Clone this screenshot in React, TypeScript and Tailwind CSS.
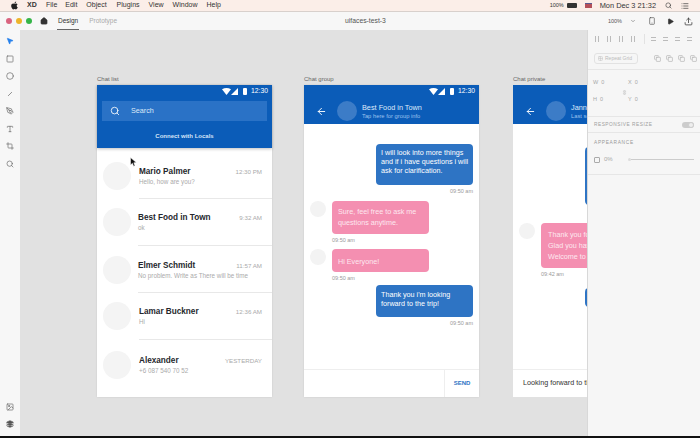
import React from 'react';
import { FaApple } from 'react-icons/fa';
import {
  ArrowLeft, Circle, Home, List, Minus, MousePointer2, PenTool, Play, Search, Smartphone, Square, Type, Upload, Layers, Crop, Link2, Grid2x2, Copy, ChevronDown, Image,
} from 'lucide-react';

const font = 'font-["Liberation_Sans",Arial,sans-serif]';

const chats = [
  { name: 'Mario Palmer', text: 'Hello, how are you?', time: '12:30 PM', pl: 'ml-[8px]', row: 'mt-[14px] h-[37px]' },
  { name: 'Best Food in Town', text: 'ok', time: '9:32 AM', pl: 'ml-[7px]', row: 'mt-[9px] h-[38px]' },
  { name: 'Elmer Schmidt', text: 'No problem. Write as There will be time', time: '11:57 AM', pl: 'ml-[7px]', row: 'mt-[10px] h-[37px]' },
  { name: 'Lamar Buckner', text: 'Hi', time: '12:36 AM', pl: 'ml-[8px]', row: 'mt-[9px] h-[38px]' },
  { name: 'Alexander', text: '+6 087 540 70 52', time: 'YESTERDAY', pl: 'ml-[8px]', row: 'mt-[11px] h-[37px]' },
];

function StatusBar() {
  return (
    <div className="h-[16px] flex items-center justify-end pb-[4px] pr-[4px] text-white">
      <svg width="9" height="7" viewBox="0 0 9 7"><path d="M0 1.2 Q4.5 -1 9 1.2 L4.5 7 Z" fill="white" /></svg>
      <svg width="7" height="7" viewBox="0 0 7 7"><path d="M7 0 V7 H0 Z" fill="white" /></svg>
      <div className="w-[4px] h-[7px] bg-white ml-[5px] mr-[4px] rounded-[1px]" />
      <span className="text-[6.8px]">12:30</span>
    </div>
  );
}

function ChatHeader({ title, sub, status = true }: { title: string; sub: string; status?: boolean }) {
  return (
    <div className="h-[39px] bg-[#0b5cb8] shrink-0">
      {status ? <StatusBar /> : <div className="h-[16px]" />}
      <div className="flex items-center">
        <ArrowLeft size={11} color="white" strokeWidth={2} className="ml-[12px]" />
        <div className="w-[20px] h-[20px] rounded-full bg-[#3c7cc7] ml-[10px] shrink-0" />
        <div className="ml-[5px] whitespace-nowrap">
          <div className="text-[7.3px] leading-[9px] text-[#dfeafa] font-medium">{title}</div>
          <div className="text-[5.8px] leading-[8px] text-[#9cc2ee]">{sub}</div>
        </div>
      </div>
    </div>
  );
}

function Bubble({ side, lines, time, box }: { side: 'me' | 'them'; lines: string[]; time: string; box: string }) {
  const me = side === 'me';
  return (
    <div className={`flex flex-col ${me ? 'items-end pr-[6px]' : 'items-start pl-[28px]'}`}>
      <div className="relative">
        {!me && <div className="absolute -left-[22px] top-0 w-[16px] h-[16px] rounded-full bg-[#f3f3f3]" />}
        <div className={`w-[97px] rounded-[4px] text-[7.2px] ${me ? 'px-[5px] bg-[#2e74c4] text-white' : 'px-[6px] bg-[#f48fb1] text-[#fde8f0]'} ${box}`}>
          {lines.map((l) => <div key={l} className="whitespace-nowrap">{l}</div>)}
        </div>
      </div>
      <div className="text-[5.5px] leading-[6px] mt-[3px] text-[#9a9a9a]">{time}</div>
    </div>
  );
}

export default function App() {
  return (
    <div className={`w-[700px] h-[438px] flex flex-col overflow-hidden bg-[#e1e1e1] text-[#333] ${font}`}>
      {/* mac menu bar */}
      <div className="h-[12px] shrink-0 bg-[#fbeee8] flex items-center text-[7px] text-[#333] border-b border-[#d8d0cc]">
        <FaApple size={9} className="ml-[10px] text-[#222]" />
        <span className="ml-[8px] font-bold w-[10px]">XD</span>
        <span className="ml-[9px]">File</span>
        <span className="ml-[8px]">Edit</span>
        <span className="ml-[9px]">Object</span>
        <span className="ml-[10px]">Plugins</span>
        <span className="ml-[9px]">View</span>
        <span className="ml-[9px]">Window</span>
        <span className="ml-[9px]">Help</span>
        <span className="ml-auto text-[5.5px]">100%</span>
        <div className="ml-[3px] w-[10px] h-[5px] bg-[#333] rounded-[1px]" />
        <div className="ml-[8px] w-[7px] h-[5px] bg-[#b4505a] border-t border-[#5a5a90]" />
        <span className="ml-[8px] text-[7.4px] whitespace-nowrap">Mon Dec 3 21:32</span>
        <Search size={7} className="ml-[9px]" />
        <List size={8} className="ml-[9px] mr-[11px]" />
      </div>

      {/* XD toolbar */}
      <div className="h-[18px] shrink-0 bg-[#f7f7f7] flex items-center text-[6.5px]">
        <div className="ml-[6px] w-[6px] h-[6px] rounded-full bg-[#d9637f]" />
        <div className="ml-[4px] w-[6px] h-[6px] rounded-full bg-[#edb42a]" />
        <div className="ml-[4px] w-[6px] h-[6px] rounded-full bg-[#35b548]" />
        <Home size={8} fill="#333" className="ml-[8px] text-[#333]" />
        <div className="ml-[9px] h-full flex items-center border-b border-[#666] px-[1px]">Design</div>
        <div className="ml-[10px] text-[#aaa]">Prototype</div>
        <div className="ml-[228px] text-[6.8px] text-[#555]">uifaces-test-3</div>
        <div className="ml-auto flex items-center text-[#555]">
          <span className="text-[5.5px]">100%</span>
          <ChevronDown size={6} className="ml-[8px]" />
          <Smartphone size={8} className="ml-[12px]" />
          <Play size={7} fill="#333" className="ml-[11px] text-[#333]" />
          <Upload size={9} className="ml-[10px] mr-[7px] text-[#333]" />
        </div>
      </div>

      <div className="flex-1 min-h-0 flex">
        {/* tool rail */}
        <div className="w-[20px] shrink-0 bg-[#f7f7f7] flex flex-col items-center pt-[7px] pb-[8px] text-[#666]">
          <div className="flex flex-col items-center gap-[9.5px]">
            <MousePointer2 size={8} fill="#2680eb" className="text-[#2680eb]" />
            <Square size={8} />
            <Circle size={8} />
            <Minus size={8} className="-rotate-45" />
            <PenTool size={8} />
            <Type size={8} />
            <Crop size={8} />
            <Search size={8} />
          </div>
          <div className="mt-auto flex flex-col items-center gap-[9px]">
            <Image size={8} />
            <Layers size={8} fill="#555" />
          </div>
        </div>

        {/* canvas */}
        <div className="flex-1 min-w-0 overflow-hidden flex pl-[77px] pt-[46px] relative">
          <div className="w-[175px] shrink-0">
            <div className="text-[6px] leading-[6px] mb-[3px] text-[#666]">Chat list</div>
            <div className="h-[312px] bg-white shadow-[0_0_2px_rgba(0,0,0,0.1)]">
              <div className="h-[63px] bg-[#0b5cb8] shadow-[0_1px_3px_rgba(0,0,0,0.25)]">
                <StatusBar />
                <div className="mx-[5px] h-[20px] bg-[#2a72c6] flex items-center text-white">
                  <Search size={10} strokeWidth={2} className="ml-[8px]" />
                  <span className="ml-[11px] text-[7.2px] text-[#dce9f8]">Search</span>
                </div>
                <div className="mt-[11px] text-center text-[6px] font-bold text-[#d5e5f7]">Connect with Locals</div>
              </div>
              {chats.map((c) => (
                <div key={c.name} className={`${c.row} flex pl-[6px]`}>
                  <div className="w-[28px] h-[28px] rounded-full bg-[#f4f4f4] shrink-0" />
                  <div className={`${c.pl} flex-1 min-w-0 flex flex-col pt-[4px]`}>
                    <div className="flex items-center justify-between pr-[10px]">
                      <span className="text-[8.2px] leading-[11px] font-bold text-[#25272c] whitespace-nowrap">{c.name}</span>
                      <span className="text-[6.2px] text-[#aaa] whitespace-nowrap">{c.time}</span>
                    </div>
                    <div className="text-[6.3px] leading-[9px] text-[#aaa] whitespace-nowrap">{c.text}</div>
                    {c.name !== 'Alexander' && <div className="mt-auto h-px bg-[#e8e8e8]" />}
                  </div>
                </div>
              ))}
            </div>
          </div>

          <div className="w-[175px] shrink-0 ml-[32px]">
            <div className="text-[6px] leading-[6px] mb-[3px] text-[#666]">Chat group</div>
            <div className="h-[312px] bg-white flex flex-col shadow-[0_0_2px_rgba(0,0,0,0.1)]">
              <ChatHeader title="Best Food in Town" sub="Tap here for group info" />
              <div className="flex-1 min-h-0 flex flex-col pt-[20px]">
                <Bubble side="me" box="h-[41px] pt-[4px] leading-[9px]" time="09:50 am" lines={['I will look into more things', 'and if i have questions i will', 'ask for clarification.']} />
                <div className="h-[7px] shrink-0" />
                <Bubble side="them" box="h-[33px] pt-[5px] leading-[11px]" time="09:50 am" lines={['Sure, feel free to ask me', 'questions anytime.']} />
                <div className="h-[6px] shrink-0" />
                <Bubble side="them" box="h-[23px] pt-[7px] leading-[11px]" time="09:50 am" lines={['Hi Everyone!']} />
                <div className="h-[4px] shrink-0" />
                <Bubble side="me" box="h-[32px] pt-[6px] leading-[8.5px]" time="09:50 am" lines={["Thank you i'm looking", 'forward to the trip!']} />
              </div>
              <div className="h-[28px] border-t border-[#eee] flex justify-end">
                <div className="w-[35px] border-l border-[#eee] flex items-center justify-center text-[6px] font-bold text-[#2e74c4]">SEND</div>
              </div>
            </div>
          </div>

          <div className="w-[175px] shrink-0 ml-[34px]">
            <div className="text-[6px] leading-[6px] mb-[3px] text-[#666]">Chat private</div>
            <div className="h-[312px] bg-white flex flex-col">
              <ChatHeader title="Jannette" sub="Last seen recently" status={false} />
              <div className="flex-1 min-h-0 flex flex-col">
                <div className="mt-[23px] ml-[72px] w-[97px] h-[58px] rounded-[4px] bg-[#2e74c4]" />
                <div className="mt-[18px] ml-[28px] w-[97px] h-[45px] rounded-[4px] bg-[#f48fb1] px-[7px] pt-[6px] text-[7.2px] leading-[11px] text-[#fde8f0] whitespace-nowrap relative">
                  <div className="absolute -left-[22px] top-0 w-[16px] h-[16px] rounded-full bg-[#f3f3f3]" />
                  <div>Thank you for</div>
                  <div>Glad you have</div>
                  <div>Welcome to the</div>
                </div>
                <div className="ml-[28px] mt-[3px] text-[5.5px] leading-[6px] text-[#9a9a9a]">09:42 am</div>
                <div className="mt-[11px] ml-[72px] w-[97px] h-[19px] rounded-[4px] bg-[#2e74c4]" />
              </div>
              <div className="h-[28px] border-t border-[#eee] flex items-center pl-[10px] text-[7.2px] text-[#333] whitespace-nowrap">Looking forward to the trip</div>
            </div>
          </div>

          {/* mouse pointer in the shot */}
          <svg className="absolute left-[110px] top-[127px]" width="7" height="10" viewBox="0 0 7 10">
            <path d="M0.5 0.5 L0.5 8 L2.4 6.3 L3.7 9.3 L5 8.7 L3.8 5.8 L6.3 5.6 Z" fill="#111" stroke="white" strokeWidth="0.5" />
          </svg>
        </div>

        {/* property inspector */}
        <div className="w-[113px] shrink-0 bg-[#f6f6f6] border-l border-[#d8d8d8] text-[#a8a8a8] text-[6px] flex flex-col">
          <div className="h-[40px] border-b border-[#e6e6e6] shrink-0">
            <div className="h-[18px] flex items-center pl-[7px]">
              <div className="flex gap-[8px]">
                {[0, 1, 2, 3].map((i) => <div key={i} className="w-[4px] h-[6px] border-x border-[#bbb]" />)}
              </div>
              <div className="w-px h-[10px] bg-[#e2e2e2] ml-[9px]" />
              <div className="flex gap-[7px] ml-[6px]">
                {[0, 1, 2, 3].map((i) => <div key={i} className="w-[5px] h-[4px] border-y border-[#bbb]" />)}
              </div>
            </div>
            <div className="flex items-center pl-[6px] pt-[5px]">
              <div className="w-[44px] h-[11px] rounded-[3px] border border-[#e2e2e2] flex items-center pl-[3px] gap-[2px] text-[5px] text-[#bbb] whitespace-nowrap">
                <Grid2x2 size={5} />Repeat Grid
              </div>
              <div className="ml-[16px] flex gap-[5px]">
                {[0, 1, 2, 3].map((i) => <Copy key={i} size={7} />)}
              </div>
            </div>
          </div>
          <div className="h-[47px] border-b border-[#e6e6e6] shrink-0 relative grid grid-cols-[35px_36px] content-start gap-y-[10px] pt-[9px] pl-[5px] text-[5.5px] leading-[7px]">
            <span>W&nbsp;&nbsp;0</span><span>X&nbsp;&nbsp;0</span>
            <span>H&nbsp;&nbsp;0</span><span>Y&nbsp;&nbsp;0</span>
            <Link2 size={5} className="absolute left-[34px] top-[20px] rotate-90" />
          </div>
          <div className="h-[16px] border-b border-[#e6e6e6] shrink-0 flex items-center justify-between px-[6px] text-[4.8px] tracking-[0.5px] text-[#a0a0a0]">
            RESPONSIVE RESIZE
            <div className="w-[12px] h-[6px] rounded-full bg-[#ccc] flex justify-end">
              <div className="w-[6px] h-[6px] rounded-full bg-[#eee] border border-[#ccc]" />
            </div>
          </div>
          <div className="h-[42px] border-b border-[#e6e6e6] shrink-0 px-[6px] pt-[7px]">
            <div className="text-[4.8px] leading-[6px] tracking-[0.7px] text-[#999]">APPEARANCE</div>
            <div className="flex items-center mt-[9px]">
              <div className="w-[6px] h-[6px] rounded-[1px] border border-[#aaa]" />
              <span className="ml-[4px] text-[6px]">0%</span>
              <div className="ml-[15px] w-[3px] h-[3px] rounded-full bg-[#ddd]" />
              <div className="flex-1 h-px bg-[#ccc]" />
            </div>
          </div>
        </div>
      </div>
      <div className="h-[2px] shrink-0 bg-[#111]" />
    </div>
  );
}
